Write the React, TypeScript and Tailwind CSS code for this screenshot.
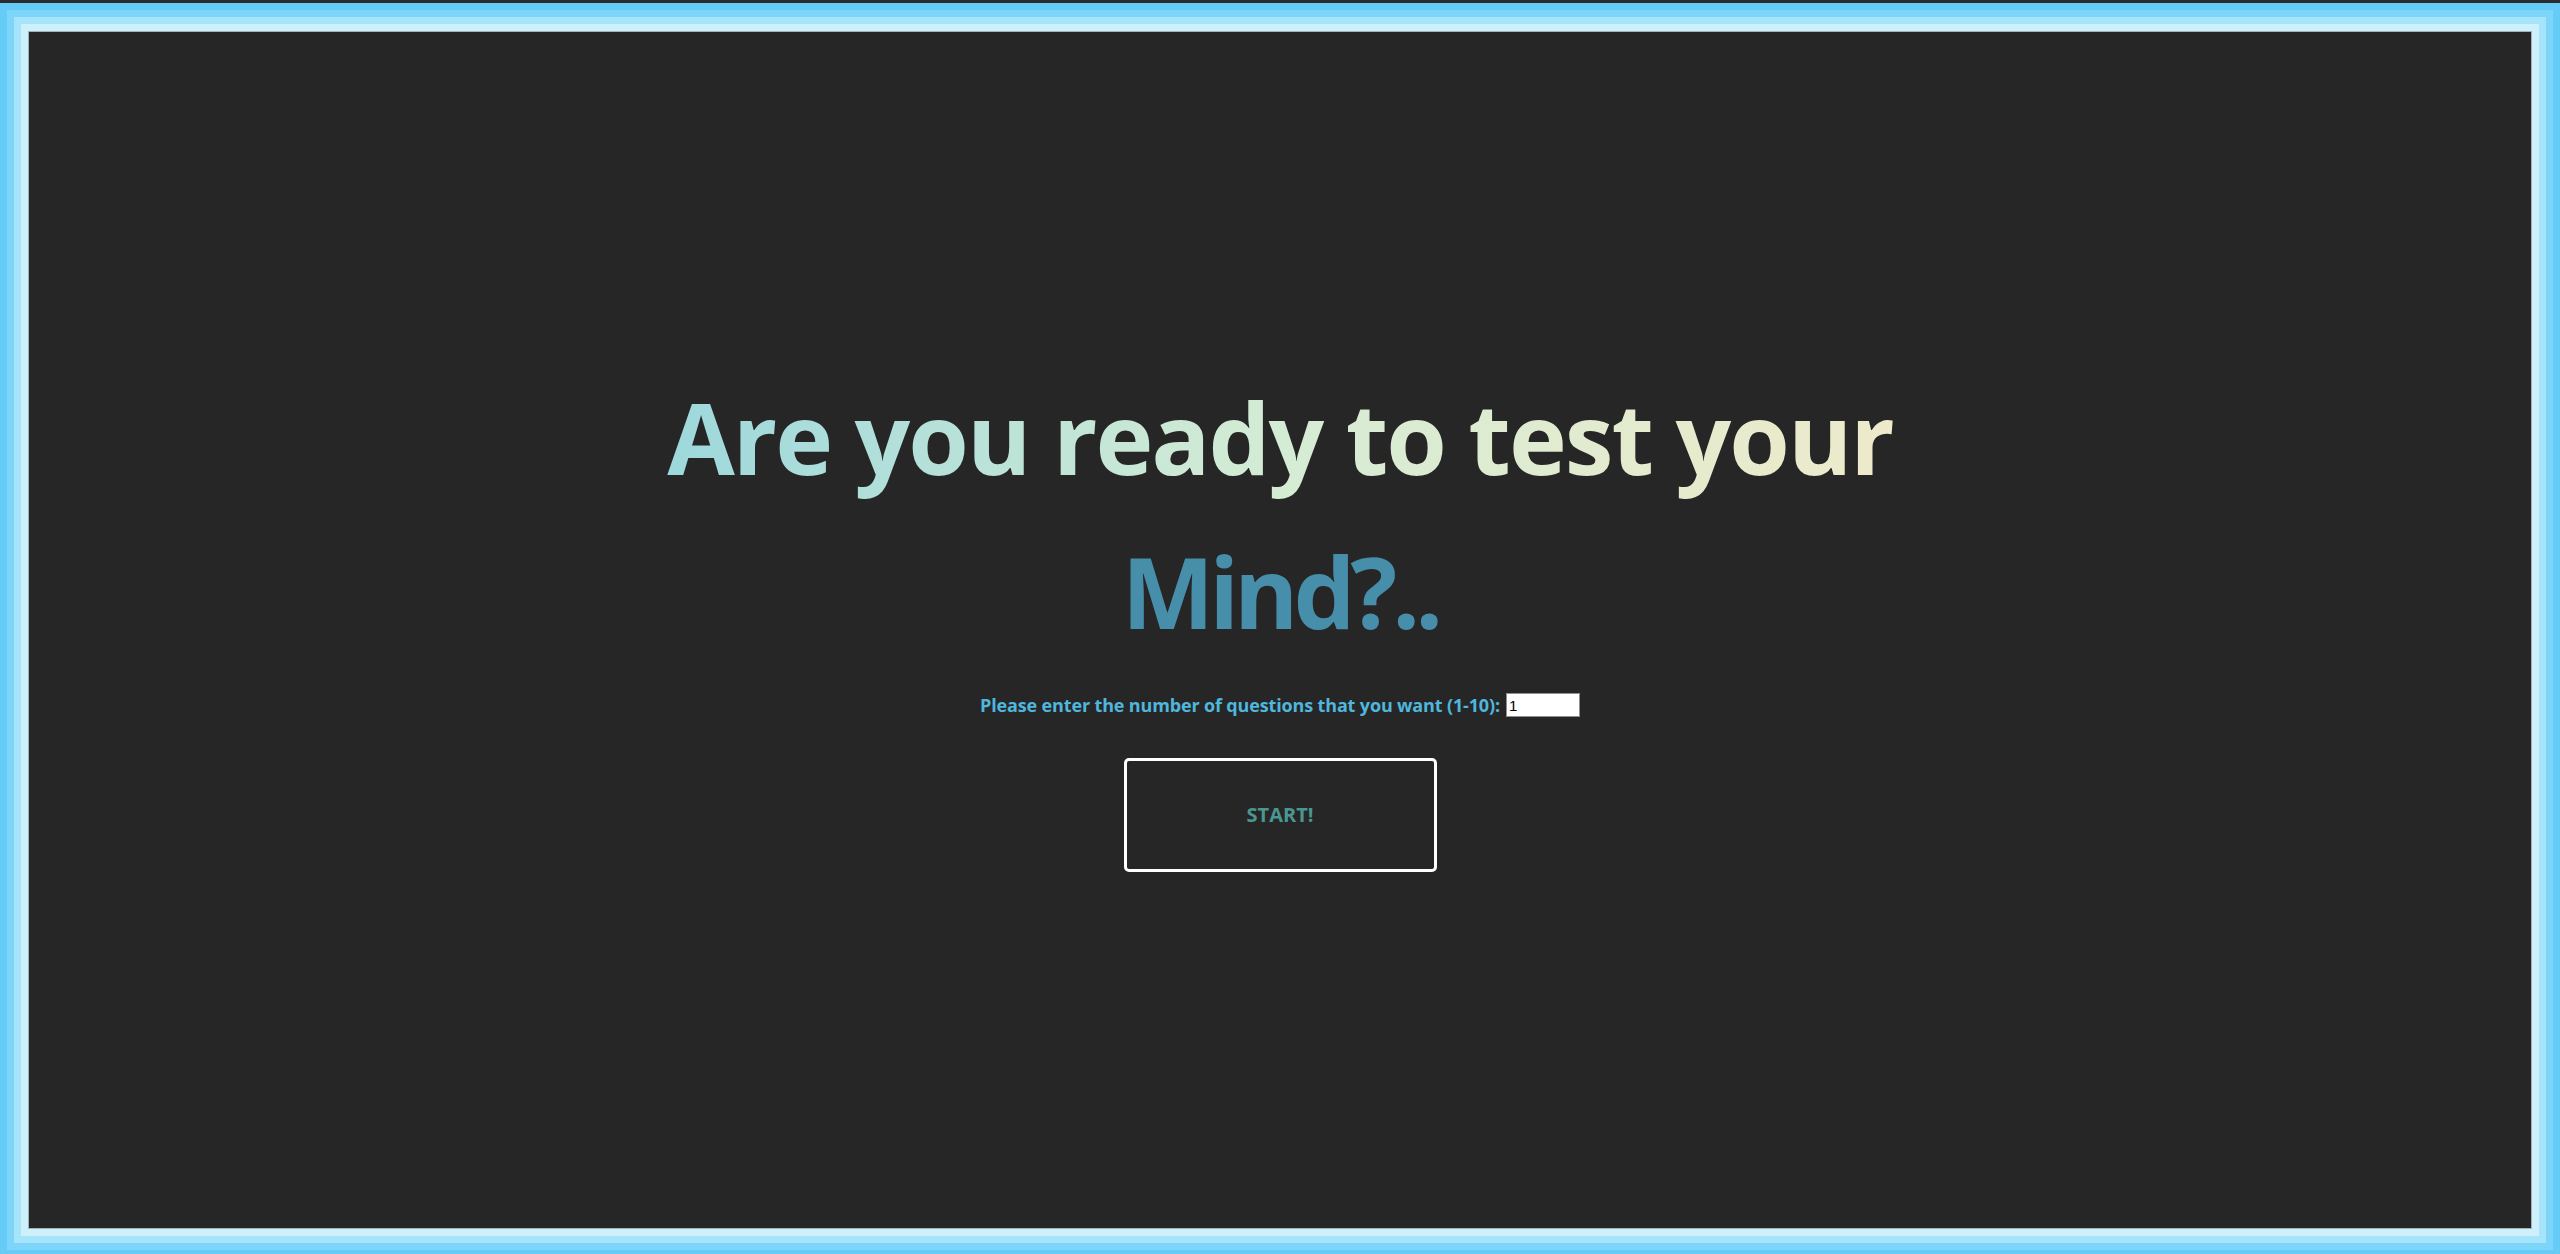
import { useState } from 'react';

export default function App() {
  const [count, setCount] = useState('1');

  return (
    <div className="h-screen overflow-hidden bg-[#2b2b2b] pt-[3px]">
      {/* Layered frame */}
      <div className="h-[1254px] bg-[#64ccf7] p-[7px]">
        <div className="h-full bg-[#7dd6f9] p-[7px]">
          <div className="h-full bg-[#a5e4fb] p-[7px]">
            <div className="h-full bg-[#cdf0fb] p-[7px]">
              <main className="flex h-full flex-col items-center justify-center border border-[#9fb3ba] bg-[#262626] pb-[28px] font-['Open_Sans','Noto_Sans',sans-serif]">
                <h1 className="text-center text-[98px] font-bold leading-[154px] tracking-[-2px]">
                  <span className="block bg-gradient-to-r from-[#9dd8dc] via-[#d5ecd4] to-[#eeeacb] bg-clip-text text-transparent">
                    Are you ready to test your
                  </span>
                  <span className="block tracking-[-5px] text-[#468ea9]">Mind?..</span>
                </h1>

                <div className="mt-[25px] flex h-[24px] items-center gap-[6px]">
                  <label
                    htmlFor="count"
                    className="text-[18px] font-bold leading-[24px] tracking-[-0.15px] text-[#4fb6dd]"
                  >
                    Please enter the number of questions that you want (1-10):
                  </label>
                  <input
                    id="count"
                    type="text"
                    value={count}
                    onChange={(e) => setCount(e.target.value)}
                    className="h-[24px] w-[74px] border border-[#8f8f8f] bg-white px-[2px] font-['Liberation_Sans',Arial,sans-serif] text-[15px] text-black outline-none"
                  />
                </div>

                <button className="mt-[41px] flex h-[114px] w-[313px] items-center justify-center rounded-[5px] border-[3px] border-white text-[20px] font-bold text-[#4a9690]">
                  START!
                </button>
              </main>
            </div>
          </div>
        </div>
      </div>
    </div>
  );
}
